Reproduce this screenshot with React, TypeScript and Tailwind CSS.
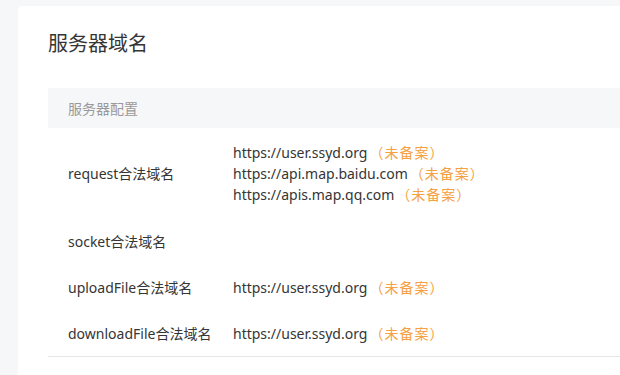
import React from "react";

const font = { fontFamily: '"Noto Sans", "Noto Sans CJK SC", sans-serif' };

function Url({ href }: { href: string }) {
  return (
    <div className="leading-[21px] whitespace-nowrap">
      <span className="text-[#353535]">{href}</span>
      <span className="text-[#f5a041] pl-[2px] tracking-[1px] [text-spacing-trim:space-all] [font-family:'Noto_Sans_CJK_SC',sans-serif]">（未备案）</span>
    </div>
  );
}

function Row({ label, urls, h }: { label: string; urls: string[]; h: string }) {
  return (
    <div className={`flex items-center ${h}`}>
      <div className="w-[185px] shrink-0 pl-[20px] text-[#353535] whitespace-nowrap">{label}</div>
      <div className="flex flex-col">
        {urls.map((u) => (
          <Url key={u} href={u} />
        ))}
      </div>
    </div>
  );
}

export default function App() {
  return (
    <div
      className="w-[620px] h-[375px] overflow-hidden bg-[#f6f7f9] pl-[18px] pt-[6px] text-[14px]"
      style={font}
    >
      <div className="w-[640px] h-[400px] bg-white rounded-tl-[4px] pl-[30px] pt-[24px]">
        <div className="text-[20px] leading-[28px] text-[#353535]">服务器域名</div>
        <div className="mt-[30px] h-[40px] flex items-center pl-[20px] bg-[#f6f7f9] text-[#9a9a9a]">
          服务器配置
        </div>
        <div className="border-b border-[#e7e7eb]">
          <Row
            h="h-[90px]"
            label="request合法域名"
            urls={["https://user.ssyd.org", "https://api.map.baidu.com", "https://apis.map.qq.com"]}
          />
          <Row h="h-[46px]" label="socket合法域名" urls={[]} />
          <Row h="h-[46px]" label="uploadFile合法域名" urls={["https://user.ssyd.org"]} />
          <Row h="h-[46px]" label="downloadFile合法域名" urls={["https://user.ssyd.org"]} />
        </div>
      </div>
    </div>
  );
}
